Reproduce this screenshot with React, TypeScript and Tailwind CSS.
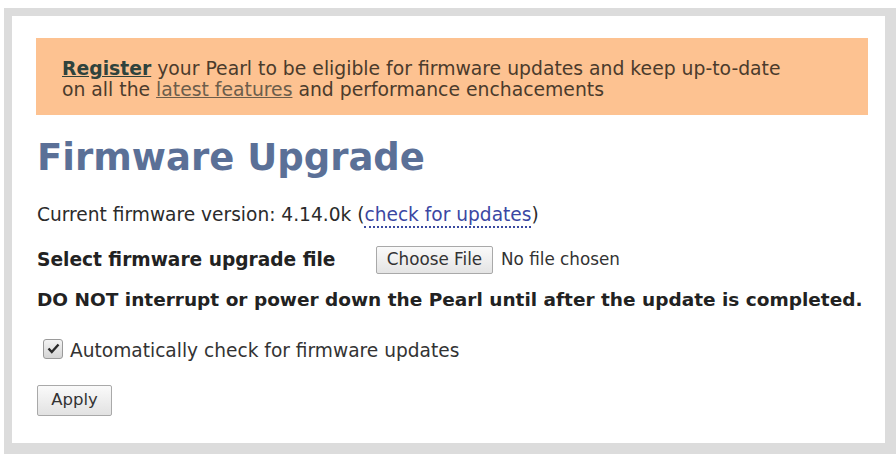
import React from 'react';

export default function App() {
  return (
    <div className="h-[454px] w-[896px] overflow-hidden bg-white pl-[4px] pt-[8px] font-['DejaVu_Sans',Verdana,sans-serif]">
      <div className="h-[446px] w-[892px] border-b-[11px] border-l-[8px] border-r-[11px] border-t-[8px] border-[#dcdcdc] bg-white">
        <div className="ml-[24px] mr-[17px] mt-[22px] h-[77px] whitespace-nowrap bg-[#fdc291] pl-[26px] pt-[20px] text-[18.8px] leading-[21px] text-[#4b3b2c]">
          <a href="#" className="font-bold text-[#2f433d] underline">Register</a> your Pearl to be eligible for firmware updates and keep up-to-date
          <br />
          on all the <a href="#" className="text-[#6c5d4b] underline">latest features</a> and performance enchacements
        </div>

        <div className="whitespace-nowrap pl-[25px] pr-4">
          <h1 className="mt-[23px] text-[37px] font-bold leading-[40px] text-[#5b7097]">Firmware Upgrade</h1>

          <p className="mt-[26px] text-[18.6px] leading-[22px] text-[#2b2b2b]">
            Current firmware version: 4.14.0k (
            <a href="#" className="border-b-2 border-dotted border-[#3a4aa0] pb-[1px] text-[#3b47a3]">check for updates</a>)
          </p>

          <div className="mt-[20px] flex items-center text-[18.6px] text-[#222]">
            <span className="w-[339px] font-bold">Select firmware upgrade file</span>
            <button className="h-[28px] w-[117px] rounded-[2px] border border-[#a9a9a9] bg-gradient-to-b from-[#fafafa] to-[#e4e4e4] text-[16.8px] text-[#333]">
              Choose File
            </button>
            <span className="ml-[8px] text-[16.8px] text-[#333]">No file chosen</span>
          </div>

          <p className="mt-[15px] text-[18.5px] font-bold leading-[22px] text-[#222]">
            DO NOT interrupt or power down the Pearl until after the update is completed.
          </p>

          <label className="mt-[29px] flex h-[22px] items-center text-[18.6px] text-[#333]">
            <span className="ml-[6px] -mt-[5px] flex h-[20px] w-[20px] items-center justify-center rounded-[3px] border border-[#9a9a9a] bg-gradient-to-b from-[#f4f4f4] to-[#d4d4d4]">
              <svg width="13" height="11" viewBox="0 0 13 11">
                <path d="M1.5 5.5 L4.8 9 L11.5 1.5" fill="none" stroke="#2a2a2a" strokeWidth="2.4" />
              </svg>
            </span>
            <span className="ml-[7px]">Automatically check for firmware updates</span>
          </label>

          <button className="mt-[23px] h-[31px] w-[75px] rounded-[2px] border border-[#a9a9a9] bg-gradient-to-b from-[#fafafa] to-[#e2e2e2] text-[16.5px] text-[#333]">
            Apply
          </button>
        </div>
      </div>
    </div>
  );
}
